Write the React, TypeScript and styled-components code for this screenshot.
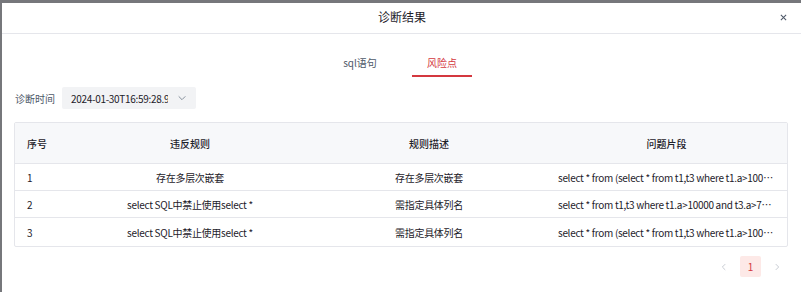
import React from 'react';
import styled, { createGlobalStyle } from 'styled-components';

const GlobalStyle = createGlobalStyle`
    html, body {
        margin: 0;
        padding: 0;
        height: 100%;
        overflow: hidden;
        background: #76777b;
        font-family: "Noto Sans CJK SC", "Noto Sans", sans-serif;
        color: #1d2129;
    }
`;

const Backdrop = styled.div`
    height: 292px;
    padding: 3px 0 0 2px;
    box-sizing: border-box;
`;

const Modal = styled.div`
    width: 800px;
    height: 289px;
    background: #fff;
    display: flex;
    flex-direction: column;
`;

const Header = styled.div`
    position: relative;
    height: 31px;
    box-sizing: border-box;
    padding-bottom: 4px;
    border-bottom: 1px solid #e5e6eb;
    display: flex;
    align-items: center;
    justify-content: center;
    font-size: 12px;
    color: #1d2129;
`;

const CloseButton = styled.span`
    position: absolute;
    right: 15px;
    top: 10px;
    width: 8px;
    height: 8px;
    display: flex;
    align-items: center;
    justify-content: center;
    cursor: pointer;
`;

const Body = styled.div`
    padding: 0 14px 0 12px;
    display: flex;
    flex-direction: column;
`;

const Tabs = styled.div`
    display: flex;
    justify-content: center;
    gap: 22px;
    margin-top: 16px;
`;

const Tab = styled.div<{ $active?: boolean }>`
    width: 60px;
    height: 27px;
    box-sizing: border-box;
    display: flex;
    justify-content: center;
    align-items: flex-start;
    font-size: 10px;
    line-height: 14px;
    padding-top: 6px;
    color: ${(p) => (p.$active ? '#d4383f' : '#4e5969')};
    border-bottom: 2px solid ${(p) => (p.$active ? '#d4383f' : 'transparent')};
    cursor: pointer;
`;

const FilterRow = styled.div`
    display: flex;
    align-items: center;
    gap: 7px;
    margin-top: 10px;
    padding-left: 1px;
`;

const Label = styled.span`
    font-size: 10px;
    color: #4e5969;
`;

const Select = styled.div`
    width: 134px;
    height: 22px;
    box-sizing: border-box;
    background: #f2f3f5;
    display: flex;
    align-items: center;
    padding: 0 9px 0 9px;
    font-size: 10px;
    letter-spacing: -0.3px;
    color: #1d2129;
    border-radius: 2px;
`;

const SelectValue = styled.span`
    flex: 1;
    overflow: hidden;
    white-space: nowrap;
    margin-right: 9px;
`;

const Table = styled.table`
    margin-top: 13px;
    width: 100%;
    border-collapse: separate;
    border-spacing: 0;
    border: 1px solid #e5e6eb;
    border-radius: 2px;
    table-layout: fixed;
    font-size: 10px;
`;

const Th = styled.th<{ $align?: string }>`
    height: 40px;
    background: #f7f8fa;
    font-weight: 500;
    text-align: ${(p) => p.$align || 'center'};
    padding: 0 12px;
    border-bottom: 1px solid #e5e6eb;
    color: #1d2129;
`;

const Td = styled.td<{ $align?: string; $last?: boolean }>`
    height: ${(p) => (p.$last ? '28px' : '27px')};
    box-sizing: border-box;
    text-align: ${(p) => p.$align || 'center'};
    padding: 0 12px;
    border-bottom: ${(p) => (p.$last ? 'none' : '1px solid #e5e6eb')};
    color: #1d2129;
    white-space: nowrap;
    overflow: hidden;
    text-overflow: ellipsis;
    letter-spacing: -0.3px;
`;

const Pagination = styled.div`
    display: flex;
    justify-content: flex-end;
    align-items: center;
    gap: 5px;
    margin-top: 9px;
`;

const PageArrow = styled.span`
    width: 22px;
    height: 21px;
    display: flex;
    align-items: center;
    justify-content: center;
    color: #c9cdd4;
`;

const PageItem = styled.span<{ $active?: boolean }>`
    width: 21px;
    height: 21px;
    display: flex;
    align-items: center;
    justify-content: center;
    font-size: 10px;
    border-radius: 2px;
    background: ${(p) => (p.$active ? '#fde9e7' : 'transparent')};
    color: ${(p) => (p.$active ? '#d4383f' : '#4e5969')};
`;

const Chevron = ({ dir }: { dir: 'down' | 'left' | 'right' }) => {
    const d =
        dir === 'down'
            ? 'M2 4l4 4 4-4'
            : dir === 'left'
            ? 'M7.5 2.5L4 6l3.5 3.5'
            : 'M4.5 2.5L8 6l-3.5 3.5';
    return (
        <svg width="10" height="10" viewBox="0 0 12 12" fill="none">
            <path d={d} stroke={dir === 'down' ? '#86909c' : '#c9cdd4'} strokeWidth="1.2" />
        </svg>
    );
};

const rows = [
    {
        id: 1,
        rule: '存在多层次嵌套',
        desc: '存在多层次嵌套',
        snippet: 'select * from (select * from t1,t3 where t1.a>10000 and t3.a>7500) t',
    },
    {
        id: 2,
        rule: 'select SQL中禁止使用select *',
        desc: '需指定具体列名',
        snippet: 'select * from t1,t3 where t1.a>10000 and t3.a>7500 and t1.b=t3.b',
    },
    {
        id: 3,
        rule: 'select SQL中禁止使用select *',
        desc: '需指定具体列名',
        snippet: 'select * from (select * from t1,t3 where t1.a>10000 and t3.a>7500) t',
    },
];

const App: React.FC = () => {
    return (
        <>
            <GlobalStyle />
            <Backdrop>
                <Modal>
                    <Header>
                        诊断结果
                        <CloseButton>
                            <svg width="7" height="7" viewBox="0 0 8 8">
                                <path d="M1 1l6 6M7 1L1 7" stroke="#4e5969" strokeWidth="1.2" />
                            </svg>
                        </CloseButton>
                    </Header>
                    <Body>
                        <Tabs>
                            <Tab>sql语句</Tab>
                            <Tab $active>风险点</Tab>
                        </Tabs>
                        <FilterRow>
                            <Label>诊断时间</Label>
                            <Select>
                                <SelectValue>2024-01-30T16:59:28.973</SelectValue>
                                <Chevron dir="down" />
                            </Select>
                        </FilterRow>
                        <Table>
                            <colgroup>
                                <col style={{ width: 53 }} />
                                <col style={{ width: 244 }} />
                                <col style={{ width: 234 }} />
                                <col />
                            </colgroup>
                            <thead>
                                <tr>
                                    <Th $align="left">序号</Th>
                                    <Th>违反规则</Th>
                                    <Th>规则描述</Th>
                                    <Th>问题片段</Th>
                                </tr>
                            </thead>
                            <tbody>
                                {rows.map((r, i) => (
                                    <tr key={r.id}>
                                        <Td $align="left" $last={i === rows.length - 1}>
                                            {r.id}
                                        </Td>
                                        <Td $last={i === rows.length - 1}>{r.rule}</Td>
                                        <Td $last={i === rows.length - 1}>{r.desc}</Td>
                                        <Td $last={i === rows.length - 1}>{r.snippet}</Td>
                                    </tr>
                                ))}
                            </tbody>
                        </Table>
                        <Pagination>
                            <PageArrow>
                                <Chevron dir="left" />
                            </PageArrow>
                            <PageItem $active>1</PageItem>
                            <PageArrow>
                                <Chevron dir="right" />
                            </PageArrow>
                        </Pagination>
                    </Body>
                </Modal>
            </Backdrop>
        </>
    );
};

export default App;
